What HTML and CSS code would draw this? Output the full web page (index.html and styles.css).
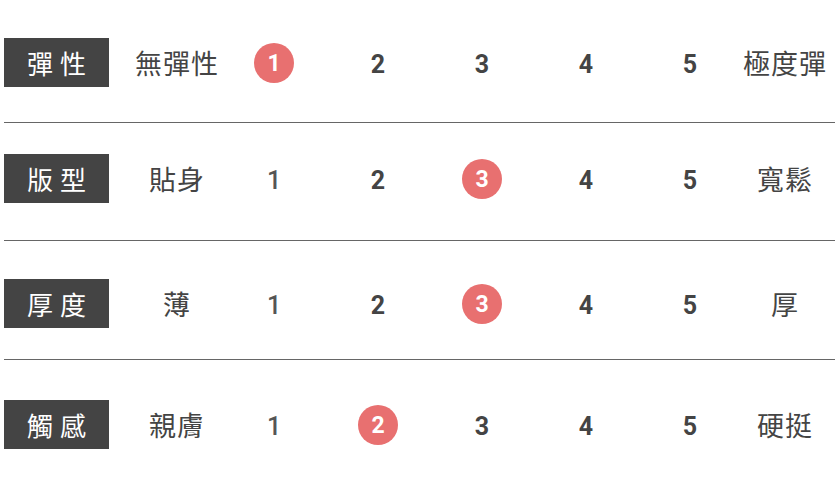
FILE: index.html
```html
<!DOCTYPE html>
<html lang="zh-Hant">
<head>
<meta charset="utf-8">
<title>尺寸表</title>
<link rel="stylesheet" href="styles.css">
</head>
<body>
<div class="table">
  <div class="row r1">
    <div class="label">彈性</div>
    <div class="low">無彈性</div>
    <div class="num"><span class="dot">1</span></div>
    <div class="num">2</div>
    <div class="num">3</div>
    <div class="num">4</div>
    <div class="num">5</div>
    <div class="high">極度彈</div>
  </div>
  <div class="row r2">
    <div class="label">版型</div>
    <div class="low">貼身</div>
    <div class="num one">1</div>
    <div class="num">2</div>
    <div class="num"><span class="dot">3</span></div>
    <div class="num">4</div>
    <div class="num">5</div>
    <div class="high">寬鬆</div>
  </div>
  <div class="row r3">
    <div class="label">厚度</div>
    <div class="low">薄</div>
    <div class="num one">1</div>
    <div class="num">2</div>
    <div class="num"><span class="dot">3</span></div>
    <div class="num">4</div>
    <div class="num">5</div>
    <div class="high">厚</div>
  </div>
  <div class="row r4">
    <div class="label">觸感</div>
    <div class="low">親膚</div>
    <div class="num one">1</div>
    <div class="num"><span class="dot">2</span></div>
    <div class="num">3</div>
    <div class="num">4</div>
    <div class="num">5</div>
    <div class="high">硬挺</div>
  </div>
</div>
</body>
</html>
```
FILE: styles.css
```css
html, body {
  margin: 0;
  padding: 0;
  background: #ffffff;
}

body {
  font-family: "Noto Sans CJK TC", "Noto Sans", sans-serif;
  color: #444444;
}

.table {
  margin-left: 4px;
  width: 831px;
}

.row {
  display: grid;
  grid-template-columns: 105px 23px 90px repeat(5, 104px) 86px;
  grid-template-rows: 49px;
  align-items: center;
}

.row.r1 { padding: 38px 0 35px; border-bottom: 1px solid #666666; }
.row.r2 { padding: 31px 0 37px; border-bottom: 1px solid #666666; }
.row.r3 { padding: 38px 0 31px; border-bottom: 1px solid #666666; }
.row.r4 { padding: 40px 0 0; }

.label {
  grid-column: 1;
  height: 49px;
  background: #444444;
  color: #ffffff;
  font-size: 26px;
  letter-spacing: 7px;
  padding-left: 7px;
  display: flex;
  align-items: center;
  justify-content: center;
  line-height: 1;
}

.low {
  grid-column: 3;
  text-align: center;
  font-size: 27px;
  line-height: 1;
  letter-spacing: 1px;
  color: #444444;
}

.high {
  text-align: center;
  font-size: 27px;
  line-height: 1;
  letter-spacing: 1px;
  color: #444444;
}

.num {
  display: flex;
  justify-content: center;
  align-items: center;
  padding-top: 3px;
  font-family: "Roboto", "Liberation Sans", sans-serif;
  font-weight: 700;
  font-size: 25px;
  line-height: 1;
  color: #444444;
}

.num.one {
  font-weight: 500;
  color: #555555;
}

.dot {
  width: 40px;
  height: 40px;
  margin-top: -2px;
  border-radius: 50%;
  background: #e87070;
  color: #ffffff;
  display: flex;
  align-items: center;
  justify-content: center;
  font-size: 23px;
  font-weight: 700;
}
```
